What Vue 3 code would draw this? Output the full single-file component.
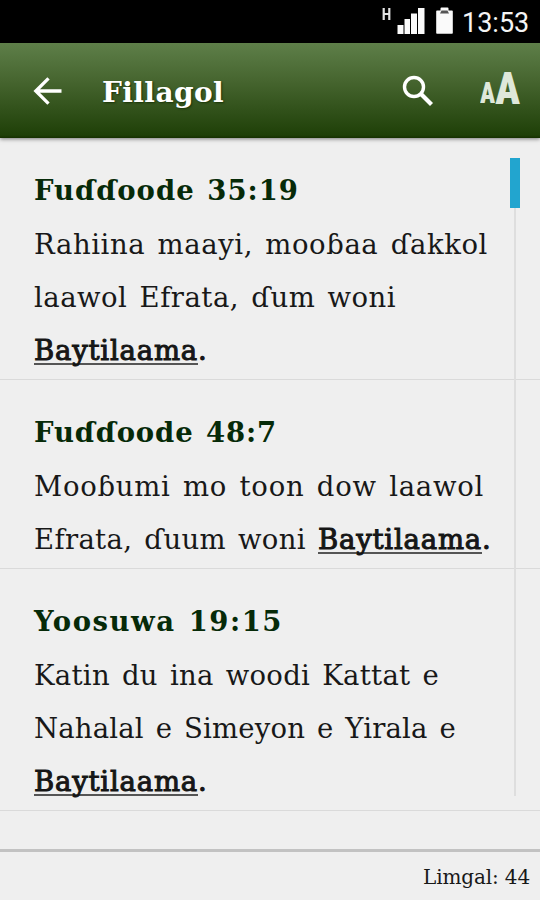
<script setup>
const results = [
  { title: 'Fuɗɗoode 35:19', width: 265, lines: [
    [{ text: 'Rahiina maayi, mooɓaa ɗakkol', width: 454 }],
    [{ text: 'laawol Efrata, ɗum woni', width: 362 }],
    [{ text: 'Baytilaama', width: 164, hit: true }, { text: '.', width: 8, strong: true }],
  ] },
  { title: 'Fuɗɗoode 48:7', width: 243, lines: [
    [{ text: 'Mooɓumi mo toon dow laawol', width: 450 }],
    [{ text: 'Efrata, ɗuum woni ', width: 284 }, { text: 'Baytilaama', width: 164, hit: true }, { text: '.', width: 8, strong: true }],
  ] },
  { title: 'Yoosuwa 19:15', width: 249, lines: [
    [{ text: 'Katin du ina woodi Kattat e', width: 405 }],
    [{ text: 'Nahalal e Simeyon e Yirala e', width: 422 }],
    [{ text: 'Baytilaama', width: 164, hit: true }, { text: '.', width: 8, strong: true }],
  ] },
]

// Tracks a run of text so that it spans the given width.
const vFit = {
  mounted(el, { value }) {
    const natural = el.getBoundingClientRect().width
    el.style.letterSpacing = `${(value - natural) / el.textContent.length}px`
  },
}
</script>

<template>
  <div class="screen">
    <div class="status">
      <svg class="signal" width="44" height="32" viewBox="0 0 44 32">
        <path d="M2.700 1v12M8.300 1v12M2.700 7h5.600" fill="none" stroke="#e4e4e4" stroke-width="2.200" />
        <path d="M16.500 18h6v9h-6zM23.500 12h5.500v15h-5.500zM30 6.500h6V27h-6zM37 1h6.500v26H37z" fill="#fafafa" />
      </svg>
      <svg class="battery" width="17" height="28" viewBox="0 0 17 28">
        <path d="M4.500 3.500V1.500Q4.500.5 5.500.5h6q1 0 1 1v2h3.500q.8 0 .8.8V26q0 .8-.8.8H1q-.8 0-.8-.8V4.300q0-.8.8-.8z" fill="#fafafa" />
        <path d="M4 6.500L5.500 3.500h6L13 6.500z" fill="#555" />
      </svg>
      <span v-fit="68" class="clock">13:53</span>
    </div>

    <header class="bar">
      <svg class="back" width="30" height="30" viewBox="0 0 30 30">
        <path d="M28.500 15H3M15.500 2.300L2.800 15 15.500 27.700" fill="none" stroke="#fff" stroke-width="3.300" />
      </svg>
      <h1 v-fit="122">Fillagol</h1>
      <svg class="search" width="32" height="32" viewBox="0 0 32 32">
        <circle cx="12" cy="12" r="9.500" fill="none" stroke="#fff" stroke-width="3.400" />
        <path d="M18.500 18.500L29.500 29.500" stroke="#fff" stroke-width="4.200" />
      </svg>
      <span class="sizes"><span class="small">A</span><span class="large">A</span></span>
    </header>

    <main class="list">
      <article v-for="item in results" :key="item.title" class="item">
        <h2><span v-fit="item.width">{{ item.title }}</span></h2>
        <p v-for="(line, i) in item.lines" :key="i"><span v-for="(run, j) in line" :key="j" v-fit="run.width" :class="{ hit: run.hit, strong: run.strong }">{{ run.text }}</span></p>
      </article>
      <div class="track"><div class="thumb"></div></div>
    </main>

    <footer class="total"><span v-fit="107">Limgal: 44</span></footer>
  </div>
</template>

<style>
body { background: #efefef; }
</style>

<style scoped>
.screen {
  display: flex;
  flex-direction: column;
  width: 540px;
  height: 900px;
  overflow: hidden;
  background: #efefef;
  color: #181818;
  font-family: "DejaVu Serif", serif;
}
.status {
  display: flex;
  flex: none;
  align-items: flex-start;
  height: 43px;
  padding: 7px 10px 0 0;
  box-sizing: border-box;
  justify-content: flex-end;
  background: #000;
}
.battery { margin: 0 9px 0 11px; }
.clock {
  width: 68px;
  font: 27px/32px Roboto, sans-serif;
  color: #f4f4f4;
  white-space: nowrap;
}
.bar {
  display: flex;
  flex: none;
  align-items: center;
  height: 95px;
  padding: 0 20px 0 33px;
  box-sizing: border-box;
  background: linear-gradient(#5e7f49, #46652f 40%, #1f4008 97%, #153000);
  box-shadow: 0 1px 4px rgba(0, 0, 0, .5);
  position: relative;
  z-index: 1;
}
h1 {
  margin: 5px auto 0 39px;
  font-size: 28px;
  line-height: 40px;
  color: #fff;
  text-shadow: 1px 1px 2px #193306;
  white-space: nowrap;
}
.search { margin-right: 46px; }
.sizes {
  display: flex;
  align-items: baseline;
  margin-top: 4px;
  font-family: Roboto, sans-serif;
  font-stretch: condensed;
  font-weight: 900;
  line-height: 48px;
  color: #dfe8da;
}
.small, .large { transform-origin: 0 80%; }
.small { font-size: 25px; transform: scaleY(1.15); }
.large { font-size: 41px; transform: scaleY(1.06); }
.list {
  position: relative;
  flex: 1;
}
.item {
  padding: 26px 0 2px 34px;
  border-bottom: 1px solid #dadada;
}
h2, p {
  display: flex;
  height: 53px;
  margin: 0;
  line-height: 53px;
  white-space: pre;
}
h2 {
  margin-bottom: 1px;
  font-size: 27.500px;
  word-spacing: 2px;
  color: #062a08;
}
p {
  font-size: 27.500px;
  word-spacing: 3px;
}
.hit {
  height: 41px;
  border-bottom: 2px solid #555;
  box-sizing: border-box;
}
.hit, .strong { -webkit-text-stroke: 1px #141414; }
.track {
  position: absolute;
  top: 20px;
  right: 20px;
  bottom: 53px;
  width: 10px;
  background: linear-gradient(#dedede, #dedede) 4px 0 / 2px 100% no-repeat;
}
.thumb {
  height: 50px;
  background: #22a5cf;
}
.total {
  display: flex;
  flex: none;
  justify-content: flex-end;
  height: 51px;
  padding: 2px 10px 0 0;
  box-sizing: border-box;
  border-top: 3px solid #c2c2c2;
  font-size: 20px;
  line-height: 46px;
}
</style>
